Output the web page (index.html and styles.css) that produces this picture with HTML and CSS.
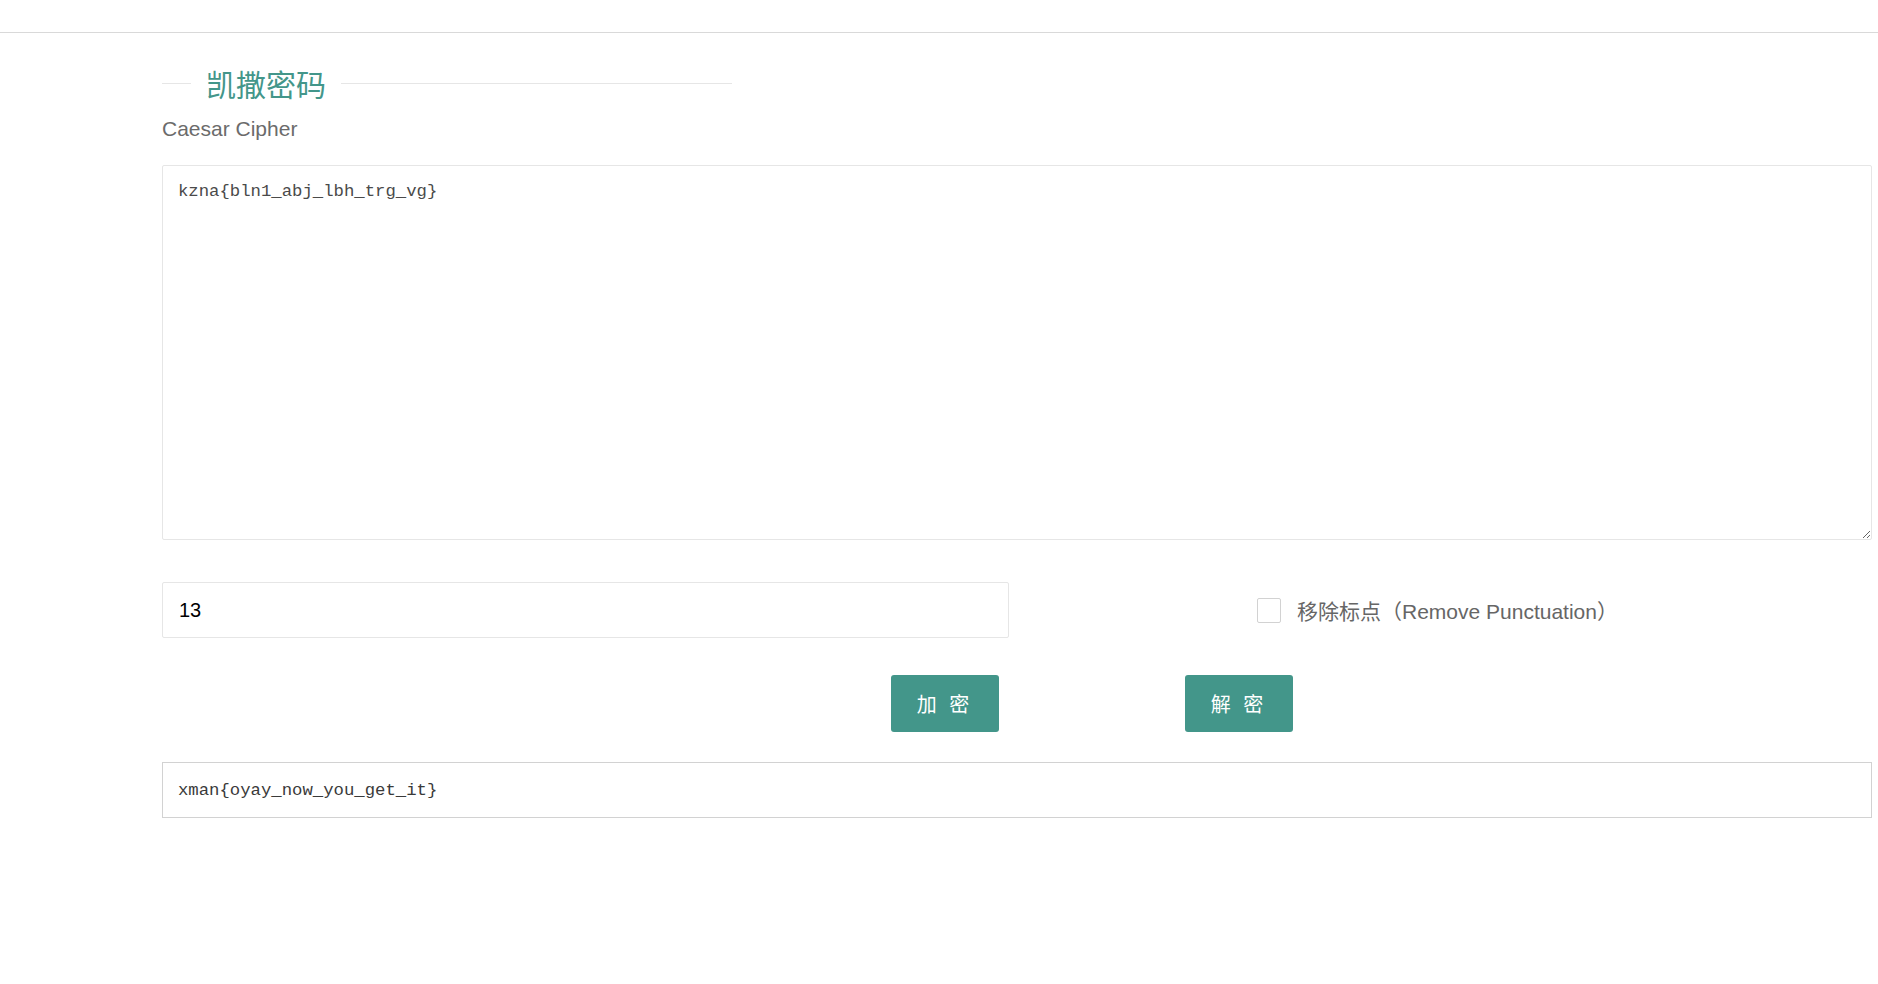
FILE: index.html
```html
<!DOCTYPE html>
<html lang="zh-CN">
<head>
  <meta charset="UTF-8" />
  <meta name="viewport" content="width=device-width, initial-scale=1.0"/>
  <title>凯撒密码</title>
  <link rel="stylesheet" href="styles.css">
</head>
<body>
  <div class="topbar"></div>

  <div class="main">
    <div class="legend">
      <span class="legend-line short"></span>
      <span class="legend-text">凯撒密码</span>
      <span class="legend-line"></span>
    </div>
    <p class="subtitle">Caesar Cipher</p>

    <textarea class="source" spellcheck="false">kzna{bln1_abj_lbh_trg_vg}</textarea>

    <div class="options">
      <input type="text" class="shift" value="13">
      <label class="remove">
        <span class="check"></span>
        <span>移除标点（Remove Punctuation）</span>
      </label>
    </div>

    <div class="actions">
      <button class="btn">加 密</button>
      <button class="btn">解 密</button>
    </div>

    <div class="output">xman{oyay_now_you_get_it}</div>
  </div>
</body>
</html>
```

FILE: styles.css
```css
body {
  margin: 0;
  background: #fff;
  font-family: "Liberation Sans", Arial, "Noto Sans CJK SC", sans-serif;
  color: #666;
}
.topbar {
  height: 32px;
  border-bottom: 1px solid #d9d9d9;
}
.main {
  padding: 0 6px 0 162px;
}
.legend {
  display: flex;
  align-items: center;
  width: 570px;
  height: 40px;
  margin-top: 30px;
}
.legend-line {
  flex: 1;
  height: 1px;
  background: #e6e6e6;
}
.legend-line.short {
  flex: 0 0 29px;
}
.legend-text {
  padding: 0 15px;
  font-family: "Noto Sans CJK SC", sans-serif;
  font-size: 30px;
  line-height: 40px;
  color: #43968a;
}
.subtitle {
  margin: 14px 0 0;
  font-size: 21px;
  line-height: 24px;
  color: #6b6b6b;
}
.source {
  display: block;
  box-sizing: border-box;
  width: 1710px;
  height: 375px;
  margin-top: 24px;
  padding: 14px 15px;
  border: 1px solid #e6e6e6;
  border-radius: 2px;
  font-family: "Liberation Mono", monospace;
  font-size: 17.3px;
  line-height: 24px;
  color: #4a4a4a;
  outline: none;
}
.options {
  display: flex;
  align-items: center;
  margin-top: 42px;
}
.shift {
  box-sizing: border-box;
  width: 847px;
  height: 56px;
  padding: 0 16px;
  border: 1px solid #e6e6e6;
  border-radius: 2px;
  font-family: "Liberation Sans", Arial, sans-serif;
  font-size: 20px;
  color: #000;
  outline: none;
}
.remove {
  display: flex;
  align-items: center;
  gap: 16px;
  margin-left: 248px;
  font-family: "Liberation Sans", Arial, "Noto Sans CJK SC", sans-serif;
  font-size: 21px;
  color: #666;
}
.check {
  box-sizing: border-box;
  width: 24px;
  height: 25px;
  border: 1px solid #d2d2d2;
  border-radius: 2px;
  background: #fff;
}
.actions {
  display: flex;
  gap: 186px;
  margin-top: 37px;
  padding-left: 729px;
}
.btn {
  width: 108px;
  height: 57px;
  border: none;
  border-radius: 3px;
  background: #43968a;
  color: #fff;
  font-family: "Noto Sans CJK SC", sans-serif;
  font-size: 20px;
  letter-spacing: 4px;
  cursor: pointer;
}
.output {
  display: flex;
  align-items: center;
  box-sizing: border-box;
  width: 1710px;
  height: 56px;
  margin-top: 30px;
  padding: 0 15px;
  border: 1px solid #d2d2d2;
  font-family: "Liberation Mono", monospace;
  font-size: 17.3px;
  color: #3a3a3a;
}
```
